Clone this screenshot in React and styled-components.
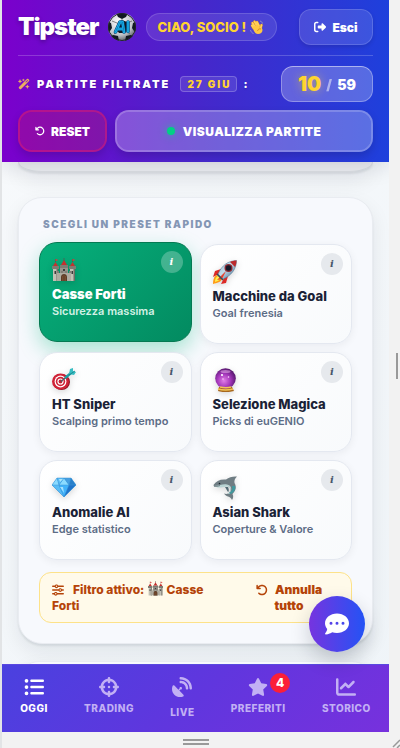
import React from "react";
import styled, { createGlobalStyle, css } from "styled-components";
import {
  FaArrowRotateLeft,
  FaChartLine,
  FaCommentDots,
  FaCrosshairs,
  FaListUl,
  FaRightFromBracket,
  FaSatelliteDish,
  FaSliders,
  FaStar,
  FaWandMagicSparkles,
} from "react-icons/fa6";

const GlobalStyle = createGlobalStyle`
  *, *::before, *::after { box-sizing: border-box; }
  body { margin: 0; background: #f2f2f2; font-family: Inter, "Liberation Sans", sans-serif; }
  button { font-family: inherit; cursor: pointer; margin: 0; }
  svg { display: block; flex: none; }
`;

/* ---------- frame ---------- */

const Frame = styled.div`
  display: grid;
  grid-template: minmax(0, 1fr) 16px / minmax(0, 1fr) 11px;
  height: 100vh;
  border-left: 2px solid #e2e4e6;
  background: #f2f2f2;
`;

const Screen = styled.div`
  position: relative;
  display: flex;
  flex-direction: column;
  overflow: hidden;
  background: linear-gradient(135deg, #f8fafc, #eff4f8);
`;

const Rail = styled.div`
  display: flex;
  align-items: center;
  justify-content: ${(p) => (p.$bottom ? "center" : "flex-end")};
  padding: ${(p) => (p.$bottom ? "4px 0 0" : "0 2px 0 0")};
`;

const Grip = styled.span`
  width: ${(p) => (p.$bottom ? "26px" : "2px")};
  height: ${(p) => (p.$bottom ? "6px" : "26px")};
  ${(p) =>
    p.$bottom
      ? css`
          border: solid #999;
          border-width: 2px 0;
        `
      : css`
          background: #999;
        `}
`;

const Corner = styled.div`
  display: flex;
  align-items: flex-end;
  justify-content: flex-end;
`;

/* ---------- header ---------- */

const Header = styled.header`
  position: relative;
  z-index: 2;
  flex: none;
  padding: 9px 16px 10px;
  color: #fff;
  background: linear-gradient(90deg, #7b00cc, #4527cb 52%, #1e40dc);
  box-shadow: 0 4px 20px rgba(15, 23, 42, 0.14);
`;

const BrandRow = styled.div`
  display: flex;
  align-items: center;
  padding-bottom: 10px;
  border-bottom: 1px solid rgba(255, 255, 255, 0.2);
`;

const Brand = styled.h1`
  margin: 0 9px 0 0;
  font-size: 24px;
  line-height: 28px;
  font-weight: 900;
  letter-spacing: -1px;
  text-shadow: 0 2px 4px rgba(0, 0, 0, 0.3);
`;

const Greeting = styled.span`
  display: flex;
  align-items: center;
  gap: 4px;
  margin-left: 10px;
  height: 28px;
  padding: 0 12px 0 11px;
  border: 1px solid rgba(255, 255, 255, 0.15);
  border-radius: 14px;
  background: rgba(255, 255, 255, 0.1);
  color: #ffd42e;
  font-size: 13px;
  font-weight: 800;
  white-space: nowrap;
`;

const LogoutButton = styled.button`
  display: flex;
  align-items: center;
  justify-content: center;
  gap: 6px;
  width: 74px;
  height: 36px;
  margin-left: auto;
  padding: 0;
  border: 1px solid rgba(255, 255, 255, 0.15);
  border-radius: 12px;
  background: rgba(255, 255, 255, 0.12);
  box-shadow: 0 2px 4px rgba(0, 0, 0, 0.12);
  color: #fff;
  font-size: 12px;
  font-weight: 900;
`;

const CounterRow = styled.div`
  display: flex;
  align-items: center;
  margin: 10px 0 8px;
`;

const CounterLabel = styled.span`
  display: flex;
  align-items: center;
  gap: 7px;
  font-size: 11px;
  font-weight: 900;
  letter-spacing: 2px;
  white-space: nowrap;
  text-shadow: 0 1px 2px rgba(0, 0, 0, 0.2);
`;

const DateTag = styled.span`
  margin: 0 6px 0 10px;
  height: 16px;
  padding: 0 5px 0 6px;
  border: 1px solid rgba(255, 255, 255, 0.22);
  border-radius: 4px;
  background: rgba(255, 255, 255, 0.1);
  color: #ffd42e;
  font-size: 10px;
  line-height: 14px;
  font-weight: 900;
  letter-spacing: 2px;
  white-space: nowrap;
`;

const Counter = styled.span`
  display: flex;
  align-items: center;
  justify-content: center;
  gap: 5px;
  width: 92px;
  height: 36px;
  margin-left: auto;
  border: 1px solid rgba(255, 255, 255, 0.3);
  border-top-color: rgba(255, 255, 255, 0.5);
  border-radius: 12px;
  background: rgba(255, 255, 255, 0.24);
  font-size: 14px;
  font-weight: 900;
`;

const CounterNow = styled.strong`
  color: #ffd42e;
  font-size: 20px;
  font-weight: 900;
  text-shadow: 0 0 10px rgba(255, 212, 46, 0.5);
`;

const CounterSlash = styled.span`
  opacity: 0.5;
`;

const ActionRow = styled.div`
  display: grid;
  grid-template-columns: 89px 1fr;
  gap: 8px;
`;

const ActionButton = styled.button`
  display: flex;
  align-items: center;
  justify-content: center;
  gap: ${(p) => (p.$danger ? "6px" : "8px")};
  height: 42px;
  padding: 0;
  border: 2px solid ${(p) => (p.$danger ? "rgba(225, 29, 100, 0.6)" : "rgba(255, 255, 255, 0.4)")};
  border-radius: 14px;
  background: ${(p) => (p.$danger ? "rgba(225, 29, 72, 0.25)" : "rgba(255, 255, 255, 0.26)")};
  background-clip: padding-box;
  box-shadow: 0 4px 8px rgba(0, 0, 0, 0.15);
  color: #fff;
  font-size: 12px;
  font-weight: 900;
  letter-spacing: ${(p) => (p.$danger ? "0" : "0.5px")};
`;

const LiveDot = styled.span`
  width: 8px;
  height: 8px;
  border-radius: 50%;
  background: #00d084;
  box-shadow: 0 0 8px rgba(0, 208, 132, 0.7);
`;

/* ---------- content ---------- */

const Content = styled.main`
  flex: 1;
  min-height: 0;
  overflow: hidden;
  display: flex;
  flex-direction: column;
  padding: 0 16px;
`;

const Panel = styled.section`
  flex: none;
  padding: 20px;
  border: 1px solid #e9ecf1;
  border-radius: 24px;
  background: #f7f9fd;
  box-shadow: 0 8px 20px rgba(15, 23, 42, 0.08), 0 2px 2px rgba(15, 23, 42, 0.08);
`;

const PanelEnd = styled.div`
  flex: none;
  height: 10px;
  margin-bottom: 25px;
  border: solid #dcdfe3;
  border-width: 0 1px 1px;
  border-radius: 0 0 24px 24px / 0 0 10px 10px;
  background: #edeef2;
  box-shadow: 0 8px 20px rgba(15, 23, 42, 0.1), 0 2px 2px rgba(15, 23, 42, 0.08);
`;

const NextPanel = styled(Panel)`
  margin-top: 17px;
`;

const PanelTitle = styled.h2`
  margin: 0 4px 14px;
  color: #8496b4;
  font-size: 10px;
  line-height: 12px;
  font-weight: 900;
  letter-spacing: 1.5px;
`;

const PresetGrid = styled.div`
  display: grid;
  grid-template-columns: 1fr 1fr;
  gap: 8px;
`;

const Preset = styled.div`
  position: relative;
  display: flex;
  transform: ${(p) => (p.$active ? "translateY(-2px)" : "none")};
`;

const PresetButton = styled.button`
  flex: 1;
  display: flex;
  flex-direction: column;
  align-items: flex-start;
  min-height: 100px;
  padding: 15px 12px 12px;
  border: 1px solid ${(p) => (p.$active ? "#047a52" : "#e4e8f0")};
  border-radius: 18px;
  background: ${(p) =>
    p.$active ? "linear-gradient(135deg, #06b07b, #038a60)" : "linear-gradient(135deg, #fff, #f8fafc)"};
  box-shadow: ${(p) =>
    p.$active ? "0 8px 20px rgba(16, 185, 129, 0.35)" : "0 2px 8px rgba(15, 23, 42, 0.06)"};
  color: ${(p) => (p.$active ? "#fff" : "#1a2236")};
  text-align: left;

  svg {
    filter: drop-shadow(0 2px 3px rgba(0, 0, 0, 0.15));
  }
`;

const PresetName = styled.span`
  margin-top: 4px;
  font-size: 13px;
  line-height: 16px;
  font-weight: ${(p) => (p.$active ? 900 : 800)};
`;

const PresetNote = styled.span`
  margin-top: 1px;
  color: ${(p) => (p.$active ? "#d3f1e5" : "#5c6c86")};
  font-size: 11px;
  line-height: 16px;
  font-weight: 600;
`;

const InfoButton = styled.button`
  position: absolute;
  top: 9px;
  right: 9px;
  width: 22px;
  height: 22px;
  padding: 0;
  border: 0;
  border-radius: 50%;
  background: ${(p) => (p.$active ? "rgba(255, 255, 255, 0.25)" : "#e6e9ed")};
  color: ${(p) => (p.$active ? "#fff" : "#47566b")};
  font: italic 700 10px/20px "DejaVu Serif", serif;
`;

const FilterBar = styled.div`
  display: flex;
  justify-content: space-between;
  margin-top: 12px;
  padding: 8px 12px;
  border: 1px solid #fde289;
  border-radius: 12px;
  background: #fffaea;
  color: #b54409;
  font-size: 12px;
  line-height: 16px;
  font-weight: 800;

  svg {
    display: inline-block;
    vertical-align: -2px;
  }
`;

const FilterText = styled.span`
  flex: 0 1 170px;

  svg {
    margin-right: 9px;
  }

  svg + svg {
    margin: 0 1px;
  }
`;

const UndoButton = styled.button`
  flex: 0 0 98px;
  padding: 0 14px 0 12px;
  border: 0;
  background: none;
  color: inherit;
  font-size: 12px;
  line-height: 16px;
  font-weight: 900;
  text-align: center;

  svg {
    margin-right: 7px;
  }
`;

const ChatButton = styled.button`
  position: absolute;
  right: 24px;
  bottom: 80px;
  z-index: 3;
  display: grid;
  place-items: center;
  width: 56px;
  height: 56px;
  padding: 0;
  border: 0;
  border-radius: 50%;
  background: linear-gradient(90deg, #7634df, #2453f5);
  box-shadow: 0 8px 20px rgba(15, 23, 42, 0.2);
  color: #fff;
`;

/* ---------- bottom navigation ---------- */

const Nav = styled.nav`
  position: relative;
  z-index: 2;
  flex: none;
  display: flex;
  justify-content: space-around;
  height: 68px;
  padding-top: 12px;
  border-top: 1px solid #5a49e0;
  background: linear-gradient(135deg, #4a41df, #6036de 50%, #7731dd);
`;

const NavLink = styled.a`
  display: flex;
  flex-direction: column;
  align-items: center;
  gap: ${(p) => (p.$tall ? "9px" : "5px")};
  color: ${(p) => (p.$active ? "#fff" : "#c2b0f4")};
  font-size: 10px;
  line-height: 12px;
  font-weight: 800;
  letter-spacing: 0.5px;
  text-decoration: none;
`;

const NavIcon = styled.span`
  position: relative;
`;

const NavBadge = styled.span`
  position: absolute;
  top: -4px;
  left: 22px;
  width: 20px;
  height: 20px;
  border-radius: 50%;
  background: #fb1f38;
  color: #fff;
  font-size: 12px;
  line-height: 20px;
  font-weight: 800;
  letter-spacing: 0;
  text-align: center;
`;

/* ---------- drawings ---------- */

const BallLogo = () => (
  <svg width="28" height="28" viewBox="0 0 28 28" aria-label="AI" role="img">
    <defs>
      <radialGradient id="ball" cx=".4" cy=".3" r=".75">
        <stop offset="0" stopColor="#fff" />
        <stop offset=".65" stopColor="#bfc3c9" />
        <stop offset="1" stopColor="#4c5058" />
      </radialGradient>
      <clipPath id="ballClip">
        <circle cx="14" cy="14" r="14" />
      </clipPath>
    </defs>
    <circle cx="14" cy="14" r="14" fill="url(#ball)" />
    <g clipPath="url(#ballClip)">
      <path
        d="M8 0h12l-2 4-4 2-4-2zM0 9l3 1 1 5-2 3-2 1zM28 9l-3 1-1 5 2 3 2 1zM5 22l5 1 1 5H6l-4-4zM23 22l-5 1-1 5h5l4-4zM10 9l4-2 5 2 1 7-3 4h-6l-3-4z"
        fill="#111821"
      />
      <path d="M14 6v3M4 8l5 2M24 8l-5 2M6 21l4-3M22 21l-4-3" stroke="#555" strokeWidth=".7" />
    </g>
    <circle cx="14" cy="14" r="13.5" fill="none" stroke="#20242b" />
    <g fill="none" strokeLinejoin="round" strokeLinecap="round">
      <path d="M7.500 19l4.500-10h2.500l1.500 10M9 16h6M20 9v9.500" stroke="#064a80" strokeWidth="3.600" />
      <path d="M7.500 19l4.500-10h2.500l1.500 10M9 16h6M20 9v9.500" stroke="#20bdf5" strokeWidth="2.300" />
      <path d="M7.500 19l4.500-10h2.500l1.500 10M9 16h6M20 9v9.500" stroke="#087eb8" strokeWidth=".9" />
    </g>
  </svg>
);

const Wave = () => (
  <svg width="14" height="15" viewBox="0 0 28 30" aria-label="mano che saluta" role="img">
    <g strokeLinecap="round" fill="none">
      <path d="M7 16L4 11M10 14L5 6M14 12L9 3M18 12L14 4M21 18l2-8" stroke="#d88b20" strokeWidth="5" />
      <path d="M7 16L4 11M10 14L5 6M14 12L9 3M18 12L14 4M21 18l2-8" stroke="#ffd05b" strokeWidth="3.6" />
    </g>
    <path d="M5 14l10-5 5 6c3 0 5 2 5 5 0 5-4 8-9 8-6 0-9-7-11-14z" fill="#ffc843" />
    <path d="M15 22c1-4 4-5 7-4" stroke="#c97919" fill="none" strokeWidth="1.4" />
    <path d="M20 2c3 1 5 3 5 5M1 20c1 4 3 6 6 7" stroke="#9aa2c8" fill="none" strokeWidth="1.5" />
  </svg>
);

const Castle = ({ size = 24 }) => (
  <svg width={size} height={size} viewBox="0 0 24 24" aria-hidden="true">
    <path d="M8 9h8v14H8z" fill="#96938a" />
    <path d="M1 9h5v14H1zM18 9h5v14h-5z" fill="#c3c1b5" />
    <path d="M4.500 9H6v14H4.500zM21.500 9H23v14h-1.500z" fill="#6f6d65" />
    <path d="M5 15h14v8H5z" fill="#aeaba0" />
    <path d="M5 15v-2h2v2h2v-2h2v2h2v-2h2v2h2v-2h2v2" fill="#827f76" />
    <path d="M0 8h7v3H0zM17 8h7v3h-7zM8 7h8v3H8z" fill="#7d7b72" />
    <path d="M1 8l2.500-4L6 8zM18 8l2.500-4L23 8zM9 7l3-5 3 5z" fill="#c4302f" />
    <path d="M3.500 4V1M20.500 4V1M12 3V0" stroke="#624c42" strokeWidth=".7" />
    <path d="M3.500 1l3 1-3 1zM20.500 1l3 1-3 1z" fill="#e73535" />
    <path d="M9 23v-4c0-4 6-4 6 0v4z" fill="#5c3c28" />
    <path d="M10.500 23v-5M12 23v-6M13.500 23v-5" stroke="#8a5733" strokeWidth=".6" />
    <path d="M2.500 13h1.500v3H2.500zM19.500 13H21v3h-1.500zM11 11h2v2h-2z" fill="#3c3d3b" />
  </svg>
);

const Rocket = () => (
  <svg width="24" height="24" viewBox="0 0 24 24" aria-hidden="true">
    <defs>
      <linearGradient id="rocketBody" x1="0" y1="0" x2="1" y2="1">
        <stop offset="0" stopColor="#8db5d2" />
        <stop offset=".45" stopColor="#c4dbe9" />
        <stop offset="1" stopColor="#2b5f88" />
      </linearGradient>
    </defs>
    <path d="M8 9l-6 2-2 6 6-3zM15 16l-2 7-5 1 3-6z" fill="#dc2926" />
    <path d="M4 15c-3 1-4 5-4 9 4-1 8-2 9-5z" fill="#ff9b16" />
    <path d="M5 16c-2 1-3 3-3 6 3-1 5-2 5-4z" fill="#fff04d" />
    <path d="M5 14C9 5 15 1 23.500.5 23.500 9 18 16 10 19z" fill="url(#rocketBody)" stroke="#456c89" strokeWidth=".5" />
    <path d="M17 2c2-1 4-1.500 6.500-1.500C23.500 3 23 5 22 7z" fill="#bb292c" />
    <circle cx="15.500" cy="8" r="4" fill="#8b2932" />
    <circle cx="15.500" cy="8" r="2.700" fill="#141b2a" />
    <path d="M4 20l9-9-4 8z" fill="#e93f2c" />
    <path d="M4 14l6 6" stroke="#38495a" strokeWidth="1.500" />
  </svg>
);

const Dart = () => (
  <svg width="24" height="24" viewBox="0 0 24 24" aria-hidden="true">
    <ellipse cx="9.500" cy="14" rx="8.500" ry="8" fill="#8e1626" />
    <ellipse cx="8.500" cy="13.500" rx="8.500" ry="8" fill="#d02237" />
    <circle cx="8.500" cy="13.500" r="5.900" fill="#fff" />
    <circle cx="8.500" cy="13.500" r="4.700" fill="#d02237" />
    <circle cx="8.500" cy="13.500" r="3.100" fill="#fff" />
    <circle cx="8.500" cy="13.500" r="1.900" fill="#c41f34" />
    <path d="M9 13.500l7-6" stroke="#505e68" strokeWidth="1.500" />
    <path d="M13 10l6-5" stroke="#1c9ca4" strokeWidth="2.500" />
    <path d="M17 6l1-5 3-1v3l3 1-2 3z" fill="#36bdc2" />
    <path d="M17 7l6-4" stroke="#147980" strokeWidth=".8" />
  </svg>
);

const CrystalBall = () => (
  <svg width="24" height="24" viewBox="0 0 24 24" aria-hidden="true">
    <defs>
      <radialGradient id="crystal" cx=".42" cy=".6" r=".65">
        <stop offset="0" stopColor="#e27fe6" />
        <stop offset=".5" stopColor="#a437bb" />
        <stop offset="1" stopColor="#4c1263" />
      </radialGradient>
    </defs>
    <path d="M6 19h13l2 4c-4 1.500-13 1.500-16 0z" fill="#a7671c" />
    <circle cx="12.500" cy="10.500" r="10.300" fill="url(#crystal)" />
    <path d="M5 21c4 1 11 1 15 0M7 19c4 1 8 1 11 0" stroke="#f3c456" strokeWidth="1.400" fill="none" />
    <ellipse cx="12.500" cy="3.500" rx="5" ry="1.500" fill="#f2bbf4" opacity=".5" />
    <circle cx="9" cy="7" r="1.100" fill="#fff" />
    <circle cx="15.500" cy="9" r=".8" fill="#ffe0ff" />
    <circle cx="10" cy="11" r=".7" fill="#ffe0ff" />
  </svg>
);

const Gem = () => (
  <svg width="24" height="24" viewBox="0 0 24 24" aria-hidden="true">
    <path d="M5 2h14l5 7-12 12L0 9z" fill="#339ce8" />
    <path d="M5 2L0 9h7zM12 2L7 9h10z" fill="#8bdbff" />
    <path d="M5 2h7L7 9zM0 9h7l5 12z" fill="#58bcf6" />
    <path d="M12 2h7l-2 7z" fill="#459ee0" />
    <path d="M19 2l5 7h-7z" fill="#287fca" />
    <path d="M7 9h10l-5 12z" fill="#41b2fa" />
    <path d="M17 9h7L12 21z" fill="#1f73c9" />
    <path d="M5 2h14l5 7-12 12L0 9zM0 9h24M5 2l2 7 5-7 5 7 2-7M7 9l5 12 5-12" stroke="#3c94d5" strokeWidth=".5" fill="none" />
    <path d="M7 3h4L8 6zM8 11h3l1 6z" fill="#d0f6ff" opacity=".7" />
  </svg>
);

const Shark = () => (
  <svg width="24" height="24" viewBox="0 0 24 24" aria-hidden="true">
    <path
      d="M.5 9C3 5 7 3 13 3.500 16 1 20 .2 24 .5c-2 2-3 4-2.500 6.500C24 11 22.500 15 19.500 18c1 2 1 4-.5 6-1-2-2-3-4-3.500-2-.6-3-1.500-4-3 3 1 5 0 6-2 1-3 0-5-2-5.500-4-.8-6 1.500-14 .5z"
      fill="#6f7d83"
    />
    <path d="M1 9.500c4 1 8-2 13-1 5 1 5 5 3 9-1 .6-2 .7-3 .5 3-1 4-4 3-6-2-3-5-1-9-.5-3 .3-6-.4-7-2z" fill="#b8d3d3" />
    <path d="M12 11l3 5c1 0 1-3 0-5z" fill="#526b74" />
    <path d="M22 10c1 4-1 6-4 8l-2-1c3-2 4-4 3-7z" fill="#41989d" />
    <circle cx="6.500" cy="7.500" r=".8" fill="#15252d" />
    <path d="M1 10c2 .6 4 .4 6-.5" stroke="#49585e" strokeWidth=".6" fill="none" />
  </svg>
);

const CornerLines = () => (
  <svg width="8" height="10" viewBox="0 0 8 10" aria-hidden="true">
    <path d="M1 9L8 2M5 10l3-3" stroke="#999" strokeWidth="1.500" />
  </svg>
);

/* ---------- data ---------- */

const presets = [
  { name: "Casse Forti", note: "Sicurezza massima", Icon: Castle, active: true },
  { name: "Macchine da Goal", note: "Goal frenesia", Icon: Rocket },
  { name: "HT Sniper", note: "Scalping primo tempo", Icon: Dart },
  { name: "Selezione Magica", note: "Picks di euGENIO", Icon: CrystalBall },
  { name: "Anomalie AI", note: "Edge statistico", Icon: Gem },
  { name: "Asian Shark", note: "Coperture & Valore", Icon: Shark },
];

const navItems = [
  { label: "OGGI", Icon: FaListUl, active: true },
  { label: "TRADING", Icon: FaCrosshairs },
  { label: "LIVE", Icon: FaSatelliteDish, tall: true },
  { label: "PREFERITI", Icon: FaStar, badge: 4 },
  { label: "STORICO", Icon: FaChartLine },
];

export default function App() {
  return (
    <>
      <GlobalStyle />
      <Frame>
        <Screen>
          <Header>
            <BrandRow>
              <Brand>Tipster</Brand>
              <BallLogo />
              <Greeting>
                CIAO, SOCIO ! <Wave />
              </Greeting>
              <LogoutButton type="button">
                <FaRightFromBracket size={12} /> Esci
              </LogoutButton>
            </BrandRow>
            <CounterRow>
              <CounterLabel>
                <FaWandMagicSparkles size={12} color="#e9ad62" /> PARTITE FILTRATE
              </CounterLabel>
              <DateTag>27 GIU</DateTag>
              <CounterLabel>:</CounterLabel>
              <Counter>
                <CounterNow>10</CounterNow>
                <CounterSlash>/</CounterSlash>
                <span>59</span>
              </Counter>
            </CounterRow>
            <ActionRow>
              <ActionButton type="button" $danger>
                <FaArrowRotateLeft size={10} /> RESET
              </ActionButton>
              <ActionButton type="button">
                <LiveDot /> VISUALIZZA PARTITE
              </ActionButton>
            </ActionRow>
          </Header>

          <Content>
            <PanelEnd />
            <Panel>
              <PanelTitle>SCEGLI UN PRESET RAPIDO</PanelTitle>
              <PresetGrid>
                {presets.map(({ name, note, Icon, active }) => (
                  <Preset key={name} $active={active}>
                    <PresetButton type="button" $active={active} aria-pressed={!!active}>
                      <Icon />
                      <PresetName $active={active}>{name}</PresetName>
                      <PresetNote $active={active}>{note}</PresetNote>
                    </PresetButton>
                    <InfoButton type="button" $active={active} aria-label={`Info ${name}`}>
                      i
                    </InfoButton>
                  </Preset>
                ))}
              </PresetGrid>
              <FilterBar>
                <FilterText>
                  <FaSliders size={12} />
                  Filtro attivo: <Castle size={15} /> Casse Forti
                </FilterText>
                <UndoButton type="button">
                  <FaArrowRotateLeft size={12} />
                  Annulla tutto
                </UndoButton>
              </FilterBar>
            </Panel>
            <NextPanel />
          </Content>

          <ChatButton type="button" aria-label="Chat">
            <FaCommentDots size={24} />
          </ChatButton>

          <Nav>
            {navItems.map(({ label, Icon, active, badge, tall }) => (
              <NavLink key={label} href="#" $active={active} $tall={tall}>
                <NavIcon>
                  <Icon size={20} />
                  {badge && <NavBadge>{badge}</NavBadge>}
                </NavIcon>
                {label}
              </NavLink>
            ))}
          </Nav>
        </Screen>
        <Rail>
          <Grip />
        </Rail>
        <Rail $bottom>
          <Grip $bottom />
        </Rail>
        <Corner>
          <CornerLines />
        </Corner>
      </Frame>
    </>
  );
}
